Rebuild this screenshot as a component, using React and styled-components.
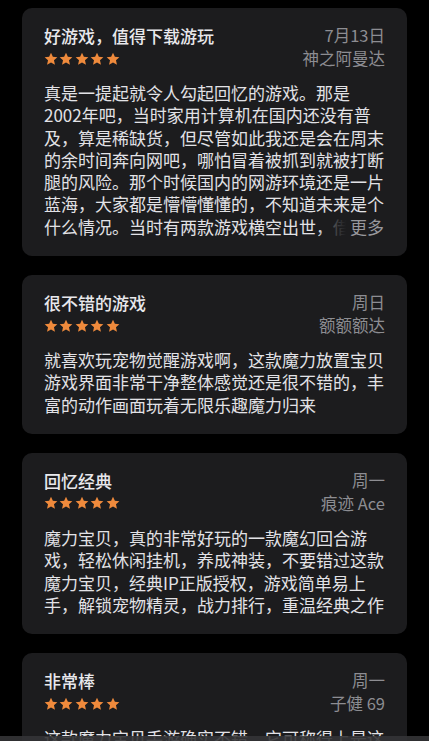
import React from "react";
import styled, { createGlobalStyle } from "styled-components";

const Global = createGlobalStyle`
  html, body { margin: 0; padding: 0; background: #000; }
  body {
    font-family: "Noto Sans CJK SC", "Noto Sans", sans-serif;
    -webkit-font-smoothing: antialiased;
  }
`;

const Page = styled.div`
  display: flex;
  flex-direction: column;
  gap: 19px;
  padding: 8px 22px 40px 22px;
  min-height: 741px;
  box-sizing: border-box;
  background: #000;
`;

const Card = styled.div`
  background: #1c1c1e;
  border-radius: 10px;
  padding: 16px 22px 18px 22px;
  display: flex;
  flex-direction: column;
  gap: 12px;
`;

const Header = styled.div`
  display: grid;
  grid-template-columns: 1fr auto;
  grid-auto-rows: 23px;
  align-items: center;
`;

const Title = styled.div`
  font-size: 17px;
  font-weight: 500;
  color: #e8e8ec;
  line-height: 23px;
  white-space: nowrap;
`;

const Meta = styled.div`
  font-size: 16.5px;
  color: #8d8d92;
  line-height: 23px;
  text-align: right;
  white-space: nowrap;
`;

const Stars = styled.div`
  display: flex;
  gap: 1.6px;
  align-items: center;
  margin-left: -0.5px;
`;

const BodyWrap = styled.div`
  position: relative;
`;

const Body = styled.div`
  font-size: 17px;
  line-height: 22.3px;
  color: #e2e2e6;
  ${(p) =>
    p.$clamp
      ? `display: -webkit-box; -webkit-box-orient: vertical; -webkit-line-clamp: ${p.$clamp}; overflow: hidden;`
      : ""}
`;

const More = styled.span`
  position: absolute;
  right: 1px;
  bottom: 0;
  line-height: 22.3px;
  font-size: 17px;
  color: #98989d;
  padding-left: 32px;
  background: linear-gradient(
    to right,
    rgba(28, 28, 30, 0) 0px,
    rgba(28, 28, 30, 0.7) 14px,
    #1c1c1e 28px
  );
`;

const TabEdge = styled.div`
  position: fixed;
  left: 0;
  right: 0;
  bottom: 0;
  height: 5px;
  background: rgba(52, 52, 54, 0.9);
`;

const Star = () => (
  <svg width="14" height="14" viewBox="0 0 24 24">
    <path
      d="M12 1.2l3.2 7 7.7.8-5.8 5.2 1.7 7.6L12 17.9l-6.8 3.9 1.7-7.6L1.1 9l7.7-.8z"
      fill="#ef8a3c"
    />
  </svg>
);

const reviews = [
  {
    title: "好游戏，值得下载游玩",
    date: "7月13日",
    author: "神之阿曼达",
    clamp: 7,
    more: true,
    body:
      "真是一提起就令人勾起回忆的游戏。那是2002年吧，当时家用计算机在国内还没有普及，算是稀缺货，但尽管如此我还是会在周末的余时间奔向网吧，哪怕冒着被抓到就被打断腿的风险。那个时候国内的网游环境还是一片蓝海，大家都是懵懵懂懂的，不知道未来是个什么情况。当时有两款游戏横空出世，借着网吧的东风迅速火遍了大江南北。",
  },
  {
    title: "很不错的游戏",
    date: "周日",
    author: "额额额达",
    body:
      "就喜欢玩宠物觉醒游戏啊，这款魔力放置宝贝游戏界面非常干净整体感觉还是很不错的，丰富的动作画面玩着无限乐趣魔力归来",
  },
  {
    title: "回忆经典",
    date: "周一",
    author: "痕迹 Ace",
    body:
      "魔力宝贝，真的非常好玩的一款魔幻回合游戏，轻松休闲挂机，养成神装，不要错过这款魔力宝贝，经典IP正版授权，游戏简单易上手，解锁宠物精灵，战力排行，重温经典之作",
  },
  {
    title: "非常棒",
    date: "周一",
    author: "子健 69",
    body:
      "这款魔力宝贝手游确实不错，它可称得上是这些年来我玩过的最好的回合制游戏之一，画面精美，玩法丰富。",
  },
];

export default function App() {
  return (
    <>
      <Global />
      <Page>
        {reviews.map((r, i) => (
          <Card key={i}>
            <Header>
              <Title>{r.title}</Title>
              <Meta>{r.date}</Meta>
              <Stars>
                {[0, 1, 2, 3, 4].map((s) => (
                  <Star key={s} />
                ))}
              </Stars>
              <Meta>{r.author}</Meta>
            </Header>
            <BodyWrap>
              <Body $clamp={r.clamp}>{r.body}</Body>
              {r.more && <More>更多</More>}
            </BodyWrap>
          </Card>
        ))}
      </Page>
      <TabEdge />
    </>
  );
}
